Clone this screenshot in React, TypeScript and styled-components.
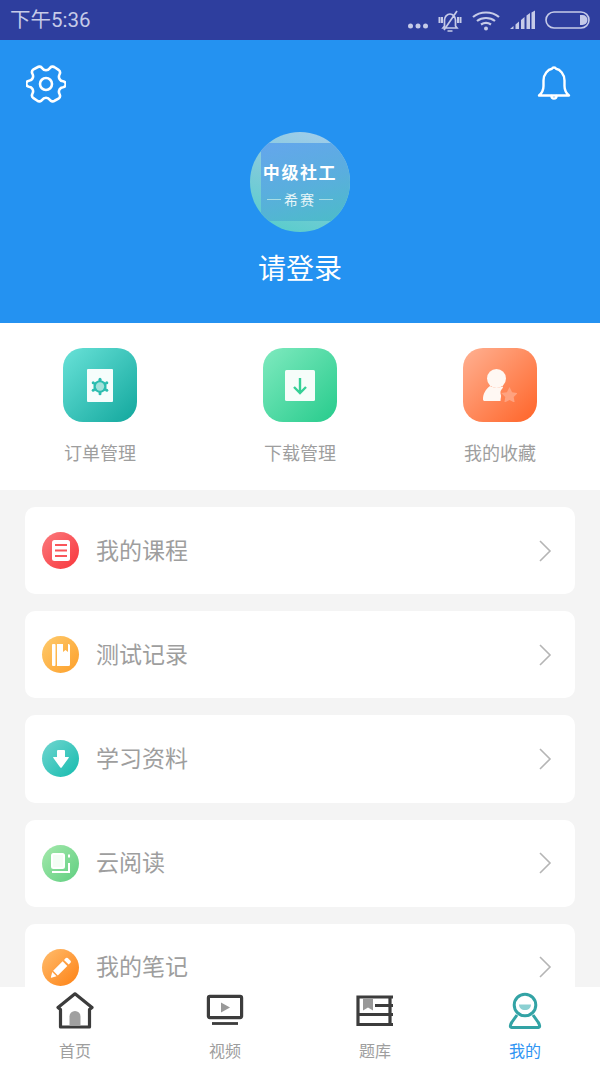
import React, { FC, ReactNode } from 'react';
import styled, { createGlobalStyle } from 'styled-components';

const GlobalStyle = createGlobalStyle`
	html,
	body {
		margin: 0;
		padding: 0;
		background: #f4f4f4;
		font-family: 'Noto Sans CJK SC', 'Noto Sans', sans-serif;
	}
`;

const Page = styled.div`
	display: flex;
	flex-direction: column;
	width: 600px;
	height: 1067px;
	overflow: hidden;
`;

const StatusBar = styled.div`
	display: flex;
	flex: none;
	align-items: center;
	justify-content: space-between;
	height: 40px;
	padding: 0 10px;
	box-sizing: border-box;
	background: #2e3e9e;
	color: #c6cbe8;
`;

const StatusTime = styled.span`
	font-family: Roboto, 'Noto Sans CJK SC', sans-serif;
	font-size: 20.5px;
	line-height: 40px;
`;

const StatusIcons = styled.div`
	display: flex;
	align-items: center;
	gap: 10px;
`;

const Header = styled.div`
	display: flex;
	flex: none;
	flex-direction: column;
	align-items: center;
	height: 283px;
	box-sizing: border-box;
	padding: 25px 26px 0;
	background: #2492f1;
`;

const HeaderTop = styled.div`
	display: flex;
	align-self: stretch;
	align-items: flex-start;
	justify-content: space-between;
	height: 67px;
	padding-right: 3px;
`;

const Avatar = styled.div`
	position: relative;
	width: 100px;
	height: 100px;
	border-radius: 50%;
	overflow: hidden;
	background: linear-gradient(200deg, #a6cdee 0%, #84cbdc 45%, #52cdc9 100%);
`;

const AvatarCover = styled.div`
	display: flex;
	flex-direction: column;
	align-items: center;
	position: absolute;
	top: 11px;
	left: 11px;
	width: 89px;
	height: 78px;
	background: linear-gradient(165deg, #64a6ec 0%, #5aaede 50%, #4cbcc8 100%);
`;

const AvatarTitle = styled.div`
	margin: 17px 11px 0 0;
	color: #fff;
	font-size: 17px;
	font-weight: 700;
	line-height: 24px;
	letter-spacing: 1.6px;
	white-space: nowrap;
`;

const AvatarSub = styled.div`
	display: flex;
	align-items: center;
	gap: 3px;
	margin: 5px 11px 0 0;
	color: #e8f6f8;
	font-size: 14px;
	line-height: 20px;
	letter-spacing: 2px;

	&::before,
	&::after {
		content: '';
		width: 14px;
		height: 1px;
		background: #a8dde4;
	}
`;

const LoginText = styled.div`
	margin-top: 14px;
	color: #fff;
	font-size: 28px;
	line-height: 42px;
`;

const Shortcuts = styled.div`
	display: flex;
	flex: none;
	height: 167px;
	padding-top: 25px;
	box-sizing: border-box;
	background: #fff;
`;

const Shortcut = styled.div`
	display: flex;
	flex: 1;
	flex-direction: column;
	align-items: center;
`;

const ShortcutTile = styled.div<{ $from: string; $to: string }>`
	display: flex;
	align-items: center;
	justify-content: center;
	width: 74px;
	height: 74px;
	border-radius: 20px;
	background: linear-gradient(135deg, ${({ $from }) => $from}, ${({ $to }) => $to});
`;

const ShortcutLabel = styled.div`
	margin-top: 17px;
	color: #9e9e9e;
	font-size: 18px;
	line-height: 27px;
`;

const List = styled.div`
	display: flex;
	flex: 1;
	flex-direction: column;
	gap: 17px;
	min-height: 0;
	padding: 17px 25px 0;
	overflow: hidden;
	background: #f4f4f4;
`;

const Row = styled.div`
	display: flex;
	flex: none;
	align-items: center;
	height: 87.2px;
	padding: 0 23px 0 17px;
	box-sizing: border-box;
	border-radius: 10px;
	background: #fff;
`;

const RowBadge = styled.div<{ $from: string; $to: string }>`
	display: flex;
	flex: none;
	align-items: center;
	justify-content: center;
	width: 37px;
	height: 37px;
	border-radius: 50%;
	background: linear-gradient(135deg, ${({ $from }) => $from}, ${({ $to }) => $to});
`;

const RowLabel = styled.div`
	flex: 1;
	margin-left: 17px;
	padding-bottom: 4px;
	color: #9e9e9e;
	font-size: 23px;
	line-height: 34px;
`;

const TabBar = styled.div`
	display: flex;
	flex: none;
	height: 80px;
	background: #fff;
`;

const Tab = styled.div<{ $active?: boolean }>`
	display: flex;
	flex: 1;
	flex-direction: column;
	align-items: center;
	padding-top: 5px;
	color: ${({ $active }) => ($active ? '#2f95f3' : '#9e9e9e')};
	font-size: 16px;
	line-height: 24px;
`;

const TabIcon = styled.div`
	display: flex;
	height: 38px;
	margin-bottom: 8px;
`;

const Chevron: FC = () => (
	<svg width="14" height="22" viewBox="0 0 14 22" fill="none" stroke="#b5b5b5" strokeWidth="1.6">
		<path d="M2 1l10 10L2 21" />
	</svg>
);

const GearIcon: FC = () => (
	<svg width="40" height="40" viewBox="0 0 40 40" fill="none" stroke="#fff" strokeWidth="2.6" strokeLinejoin="round">
		<path d="M11 4c2-1.500 4-1 5 .5 1 1.500 2.500 2.200 4 2.200s3-.7 4-2.200c1-1.500 3-2 5-.5l3.500 2.300c1.800 1.300 1.800 3.200 1 4.700-.8 1.500-.8 3 0 4.500.8 1.400 2 2.200 3.500 2.300 1.800.2 2.700 1.300 2.700 2.900s-.9 2.800-2.700 3c-1.500.1-2.700.9-3.500 2.300-.8 1.500-.8 3 0 4.500.8 1.500.8 3.400-1 4.700L29 37c-2 1.500-4 1-5-.5-1-1.500-2.500-2.200-4-2.200s-3 .7-4 2.200c-1 1.500-3 2-5 .5l-3.500-2.300c-1.800-1.300-1.800-3.200-1-4.700.8-1.500.8-3 0-4.500-.8-1.400-2-2.200-3.500-2.300-1.800-.2-2.700-1.400-2.700-3s.9-2.700 2.700-2.900c1.500-.1 2.700-.9 3.500-2.300.8-1.500.8-3 0-4.500-.8-1.500-.8-3.400 1-4.700z" transform="translate(0 -1.5)" />
		<circle cx="20" cy="19" r="6" />
	</svg>
);

const BellIcon: FC = () => (
	<svg width="34" height="36" viewBox="0 0 34 36" fill="none" stroke="#fff" strokeWidth="2.4" strokeLinejoin="round" strokeLinecap="round">
		<path d="M2 30.500c3-2.500 4.500-5 4.500-9.500v-5.500C6.500 9 11 4.500 15 3.800 15.500 2 18.500 2 19 3.800c4 .7 8.500 5.200 8.500 11.700V21c0 4.500 1.500 7 4.500 9.500z" />
		<path d="M14.500 31c0 3.500 5 3.500 5 0" />
	</svg>
);

const OrderIcon: FC = () => (
	<svg width="26" height="33" viewBox="0 0 26 33">
		<rect width="26" height="33" rx="1" fill="#f6fdfc" />
		<g fill="#2cbdb0">
			<path d="M13 10.500l6.500 3.500v7L13 24.500 6.500 21v-7z" />
			<circle cx="13" cy="10.200" r="1.500" />
			<circle cx="13" cy="24.800" r="1.500" />
			<circle cx="6.200" cy="13.800" r="1.500" />
			<circle cx="19.800" cy="13.800" r="1.500" />
			<circle cx="6.200" cy="21.200" r="1.500" />
			<circle cx="19.800" cy="21.200" r="1.500" />
		</g>
		<circle cx="13" cy="17.500" r="4.200" fill="#a4e2db" />
	</svg>
);

const DownloadTileIcon: FC = () => (
	<svg width="30" height="31" viewBox="0 0 30 31">
		<rect width="30" height="31" rx="1.5" fill="#f6fdfa" />
		<path d="M15 8v15M9 17l6 6 6-6" fill="none" stroke="#35d096" strokeWidth="2.4" />
	</svg>
);

const FavoriteIcon: FC = () => (
	<svg width="34" height="33" viewBox="0 0 34 33">
		<circle cx="13.500" cy="9.500" r="9.500" fill="#fff8f3" />
		<path d="M0 30c0-5 2.500-9.500 7-13 4 2 8.500 2 13 .5.500 1.500-2 3-2.500 5-.5 2.500 1 3.500.5 5.500-.3 1.500-.5 2.500-.5 4H2c-1.500 0-2-.5-2-2z" fill="#fff8f3" />
		<path d="M26.500 18l2.600 5.200 5.700.8-4.100 4 1 5.700-5.200-2.700-5.200 2.700 1-5.700-4.100-4 5.700-.8z" fill="#ffa27f" />
	</svg>
);

const CourseIcon: FC = () => (
	<svg width="18" height="21" viewBox="0 0 18 21">
		<rect width="18" height="21" rx="2.5" fill="#fff" />
		<path d="M3 5h12M3 10.500h12M3 16h12" stroke="#f9565b" strokeWidth="2.2" />
	</svg>
);

const RecordIcon: FC = () => (
	<svg width="18" height="22" viewBox="0 0 18 22" fill="#fff">
		<rect width="3.500" height="22" rx="1" />
		<path d="M5 0h6v8l2.500-2L16 8V0h.500A1.500 1.500 0 0 1 18 1.500v19a1.500 1.500 0 0 1-1.500 1.500H5z" />
	</svg>
);

const MaterialIcon: FC = () => (
	<svg width="16" height="18" viewBox="0 0 16 18" fill="#fff">
		<path d="M5 0h6a1 1 0 0 1 1 1v6h3.400a.5.5 0 0 1 .4.8L8.700 17.500a1 1 0 0 1-1.400 0L.2 7.800A.5.5 0 0 1 .6 7H4V1a1 1 0 0 1 1-1z" />
	</svg>
);

const ReadIcon: FC = () => (
	<svg width="21" height="22" viewBox="0 0 21 22" fill="none" stroke="#fff">
		<rect x="2" y="2" width="12" height="14" rx="1.500" fill="#f4fdf5" strokeWidth="2" />
		<path d="M2 20h17v-9M19 2.500v3" strokeWidth="2" />
	</svg>
);

const NoteIcon: FC = () => (
	<svg width="22" height="21" viewBox="0 0 24 23" fill="#fff">
		<path d="M17.300 1.200a1.500 1.500 0 0 1 2.100 0l3 3a1.500 1.500 0 0 1 0 2.100l-2 2-5.100-5.100z" />
		<path d="M13.800 4.700l5.100 5.100L8.500 20.200l-5.100-5.100z" />
		<path d="M2.400 16.500l4.700 4.700-5.700 1.400a.4.4 0 0 1-.5-.5z" />
	</svg>
);

const HomeIcon: FC = () => (
	<svg width="38" height="38" viewBox="0 0 38 38" fill="none" stroke="#3c3c3c" strokeWidth="3.2" strokeLinejoin="round" strokeLinecap="round">
		<path d="M2 15.500L19 1.800l17 13.700-2.500 2V35h-29V17.500z" />
		<path d="M13.500 34V24.500a5.500 5.500 0 0 1 11 0V34z" fill="#a0a0a0" stroke="none" />
	</svg>
);

const VideoIcon: FC = () => (
	<svg width="38" height="38" viewBox="0 0 38 38" fill="none" stroke="#3c3c3c" strokeWidth="3.2">
		<rect x="2.400" y="4.400" width="33.200" height="21.200" rx="1.5" />
		<path d="M6 31.500h26" strokeWidth="2.8" />
		<path d="M15 10.500l9 5-9 5z" fill="#999" stroke="none" />
	</svg>
);

const BankIcon: FC = () => (
	<svg width="38" height="38" viewBox="0 0 38 38" fill="none" stroke="#3c3c3c" strokeWidth="3.2">
		<path d="M37 5H2v27.500h35M37 13.500H19M37 22.500H2M34 5v27.500" />
		<path d="M7 6.500h10v12l-5-3-5 3z" fill="#999" stroke="none" />
	</svg>
);

const MineIcon: FC = () => (
	<svg width="38" height="38" viewBox="0 0 38 38" fill="none" stroke="#33a3a5" strokeWidth="3" strokeLinejoin="round">
		<circle cx="19" cy="13" r="10.800" />
		<path d="M11 23l-5 7c-1.500 2-2.500 5.500-.5 5.500h27c2 0 1-3.500-.5-5.500l-5-7" />
		<path d="M13 12.500h12c0 3.500-2.500 5.500-6 5.500s-6-2-6-5.500z" fill="#8bd0d2" stroke="none" />
	</svg>
);

const StatusGlyphs: FC = () => (
	<StatusIcons>
		<svg width="20" height="24" viewBox="0 0 20 24" fill="currentColor">
			<circle cx="2.500" cy="18" r="2.500" />
			<circle cx="10" cy="18" r="2.500" />
			<circle cx="17.500" cy="18" r="2.500" />
		</svg>
		<svg width="24" height="24" viewBox="0 0 24 24" fill="none" stroke="currentColor" strokeWidth="1.7">
			<path d="M6.500 18v-6c0-3 2.500-6 5.500-6s5.500 3 5.500 6v6l1.500 2H5zM9.500 23h5M19 3L6 22" />
			<path d="M1.500 9v6M22.500 9v6M4 9v6M20 9v6" strokeWidth="2" />
		</svg>
		<svg width="28" height="24" viewBox="0 0 28 24" fill="none" stroke="currentColor" strokeWidth="2.2">
			<path d="M1 9c7-6 19-6 26 0M5 13c5-4 13-4 18 0M9 16.500c3-2 7-2 10 0" />
			<circle cx="14" cy="20.500" r="2" fill="currentColor" stroke="none" />
		</svg>
		<svg width="25" height="24" viewBox="0 0 25 24" fill="currentColor">
			<path d="M0 21l3.500-3v3zM5.500 16.500l3.500-3V21H5.500zM11 12l3.500-3v12H11zM16.500 7.500L20 5v16h-3.500zM21.500 4.500L25 2.500V21h-3.500z" />
		</svg>
		<svg width="45" height="24" viewBox="0 0 45 24" fill="none" stroke="currentColor">
			<rect x="1" y="4" width="43" height="16" rx="8" strokeWidth="1.6" />
			<path d="M35 7h2.500a5 5 0 0 1 0 10H35z" fill="currentColor" stroke="none" />
		</svg>
	</StatusIcons>
);

type ShortcutItem = { label: string; from: string; to: string; icon: ReactNode };
type RowItem = ShortcutItem;

const shortcuts: ShortcutItem[] = [
	{ label: '订单管理', from: '#69e2d8', to: '#12a79d', icon: <OrderIcon /> },
	{ label: '下载管理', from: '#7feabf', to: '#27cb8c', icon: <DownloadTileIcon /> },
	{ label: '我的收藏', from: '#ffb192', to: '#ff6428', icon: <FavoriteIcon /> },
];

const rows: RowItem[] = [
	{ label: '我的课程', from: '#fb7b7e', to: '#f8353b', icon: <CourseIcon /> },
	{ label: '测试记录', from: '#fecb6d', to: '#fd9f2a', icon: <RecordIcon /> },
	{ label: '学习资料', from: '#72d6d0', to: '#14bbae', icon: <MaterialIcon /> },
	{ label: '云阅读', from: '#a5e9ac', to: '#5fce80', icon: <ReadIcon /> },
	{ label: '我的笔记', from: '#ffbd6e', to: '#fe8113', icon: <NoteIcon /> },
];

const tabs = [
	{ label: '首页', icon: <HomeIcon /> },
	{ label: '视频', icon: <VideoIcon /> },
	{ label: '题库', icon: <BankIcon /> },
	{ label: '我的', icon: <MineIcon />, active: true },
];

const App: FC = () => (
	<Page>
		<GlobalStyle />
		<StatusBar>
			<StatusTime>下午5:36</StatusTime>
			<StatusGlyphs />
		</StatusBar>
		<Header>
			<HeaderTop>
				<GearIcon />
				<BellIcon />
			</HeaderTop>
			<Avatar>
				<AvatarCover>
					<AvatarTitle>中级社工</AvatarTitle>
					<AvatarSub>希赛</AvatarSub>
				</AvatarCover>
			</Avatar>
			<LoginText>请登录</LoginText>
		</Header>
		<Shortcuts>
			{shortcuts.map((item) => (
				<Shortcut key={item.label}>
					<ShortcutTile $from={item.from} $to={item.to}>
						{item.icon}
					</ShortcutTile>
					<ShortcutLabel>{item.label}</ShortcutLabel>
				</Shortcut>
			))}
		</Shortcuts>
		<List>
			{rows.map((item) => (
				<Row key={item.label}>
					<RowBadge $from={item.from} $to={item.to}>
						{item.icon}
					</RowBadge>
					<RowLabel>{item.label}</RowLabel>
					<Chevron />
				</Row>
			))}
		</List>
		<TabBar>
			{tabs.map((tab) => (
				<Tab key={tab.label} $active={tab.active}>
					<TabIcon>{tab.icon}</TabIcon>
					{tab.label}
				</Tab>
			))}
		</TabBar>
	</Page>
);

export default App;
